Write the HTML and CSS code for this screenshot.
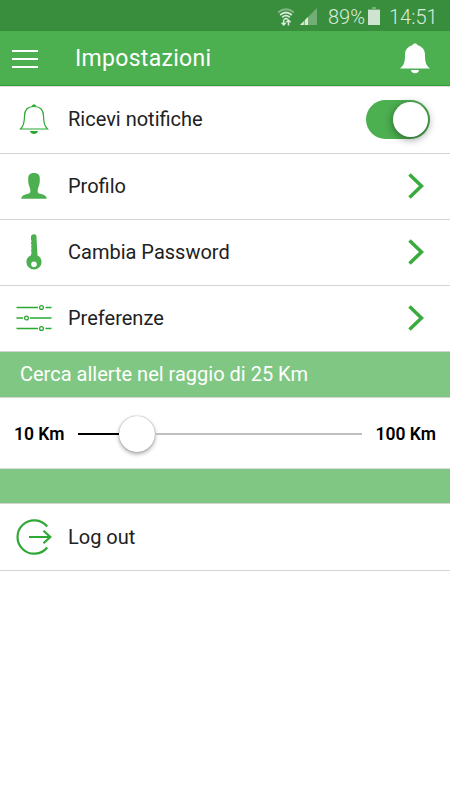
FILE: index.html
```html
<!DOCTYPE html>
<html lang="it">
<head>
  <meta charset="utf-8">
  <title>Impostazioni</title>
  <link rel="stylesheet" href="styles.css">
</head>
<body>
  <div class="status-bar">
    <svg class="wifi" width="18" height="20" viewBox="0 0 18 20">
      <path d="M1 5.500Q9-1 17 5.500" stroke="#81b783"/>
      <path d="M3.200 8Q9 3 14.800 8M5.200 10.400Q9 7 12.800 10.400M7.200 12.400Q9 11 10.800 12.400" stroke="#dcebdc"/>
      <path d="M6.700 12.500V18M4.600 15.800l2.100 2.200 2.100-2.200M11.500 18.500v-5.500M9.400 15.200l2.100-2.200 2.100 2.200" stroke="#dcebdc" stroke-width="1.500"/>
    </svg>
    <svg class="signal" width="17" height="17" viewBox="0 0 17 17">
      <path d="M0 17L17 0V17Z" fill="#72ae75"/>
      <path d="M0 17L8 9V17Z" fill="#dcebdc"/>
      <path d="M4.300 12V17" stroke="#388e3c" stroke-width=".7"/>
    </svg>
    <span class="percent">89%</span>
    <svg class="battery" width="12" height="18" viewBox="0 0 12 18">
      <path d="M4 0H8V2H12V4H0V2H4Z" fill="#72ae75"/>
      <path d="M0 3H12V18H0Z" fill="#cfe4d0"/>
    </svg>
    <span class="time">14:51</span>
  </div>

  <div class="header">
    <div class="menu">
      <span></span>
      <span></span>
      <span></span>
    </div>
    <h1>Impostazioni</h1>
    <svg class="bell" width="30" height="31" viewBox="0 0 30 31">
      <path d="M0 25.500C4 22.500 5 19 5 12C5 6.500 8 3.300 12.500 2.200C12.700 -.2 17.300 -.2 17.500 2.200C22 3.300 25 6.500 25 12C25 19 26 22.500 30 25.500Z" fill="#fff"/>
      <path d="M11 27H19C18.500 31.300 11.500 31.300 11 27Z" fill="#fff"/>
    </svg>
  </div>

  <div class="list">
    <div class="row first">
      <div class="icon">
        <svg width="30" height="31" viewBox="0 0 30 31">
          <path d="M1.500 25C4.800 22 5.500 18.500 5.500 12C5.500 6 8.500 2.500 15 2.500C21.500 2.500 24.500 6 24.500 12C24.500 18.500 25.200 22 28.500 25Z" fill="none" stroke="#2ba832" stroke-width="1.200"/>
          <path d="M12.800 2.300C12.800 -.1 17.200 -.1 17.200 2.300ZM11 27H19C18.300 31 11.700 31 11 27Z" fill="#2ba832"/>
        </svg>
      </div>
      <span class="label">Ricevi notifiche</span>
      <div class="toggle"><span class="knob"></span></div>
    </div>
    <div class="row">
      <div class="icon">
        <svg width="26" height="26" viewBox="0 0 26 26">
          <path d="M13 0C9 0 7 2 7.200 6C7.200 9 7.500 11.500 8.300 13.500C9.300 15.500 9.300 17 9.300 18.500C9.300 20.500 7.500 20.600 5 21.300C2 22.200 .4 23.300 .3 25.700H25.700C25.600 23.300 24 22.200 21 21.300C18.500 20.600 16.700 20.500 16.700 18.500C16.700 17 16.700 15.500 17.700 13.500C18.500 11.500 18.800 9 18.800 6C19 2 17 0 13 0Z" fill="#4caf50"/>
        </svg>
      </div>
      <span class="label">Profilo</span>
      <svg class="arrow" width="16" height="26" viewBox="0 0 16 26"><path d="M1.500 1.500L13.500 13L1.500 24.500"/></svg>
    </div>
    <div class="row">
      <div class="icon">
        <svg width="16" height="36" viewBox="0 0 16 36">
          <path d="M6.500 .5L9 .3L10.400 1.500L11.500 21.500C14 22.700 15.600 25 15.600 28A7.600 7.600 0 0 1 .4 28C.4 25 2 22.700 5 21.300L5.600 18L5 16.500L5.600 14.500L5 12.500L5.600 11L4.800 9L5.600 7.500L5 5.500V2Z" fill="#4caf50"/>
          <circle cx="8" cy="30.200" r="2.800" fill="#fff"/>
        </svg>
      </div>
      <span class="label">Cambia Password</span>
      <svg class="arrow" width="16" height="26" viewBox="0 0 16 26"><path d="M1.500 1.500L13.500 13L1.500 24.500"/></svg>
    </div>
    <div class="row">
      <div class="icon">
        <svg width="36" height="28" viewBox="0 0 36 28" fill="none" stroke="#2ba832" stroke-width="1.300">
          <path d="M.5 3.500H22M29.500 3.500H35.500M.5 14H7M14 14H35.500M.5 24.500H22M29.500 24.500H35.500"/>
          <circle cx="25.500" cy="3.500" r="1.900"/>
          <circle cx="10.500" cy="14" r="1.900"/>
          <circle cx="25.500" cy="24.500" r="1.900"/>
        </svg>
      </div>
      <span class="label">Preferenze</span>
      <svg class="arrow" width="16" height="26" viewBox="0 0 16 26"><path d="M1.500 1.500L13.500 13L1.500 24.500"/></svg>
    </div>
    <div class="divider"><span>Cerca allerte nel raggio di 25 Km</span></div>
    <div class="range">
      <b class="min">10 Km</b>
      <div class="track">
        <div class="filled"></div>
        <div class="thumb"></div>
        <div class="rest"></div>
      </div>
      <b class="max">100 Km</b>
    </div>
    <div class="divider empty"></div>
    <div class="row last">
      <div class="icon">
        <svg width="36" height="36" viewBox="0 0 36 36" fill="none" stroke="#2fa836" stroke-width="2.200">
          <path d="M31.200 7.500A16.700 16.700 0 1 0 31.200 28.500"/>
          <path d="M13 18H34M27.500 11.800L34.300 18L27.500 24.200"/>
        </svg>
      </div>
      <span class="label">Log out</span>
    </div>
  </div>
</body>
</html>
```
FILE: styles.css
```css
body {
  margin: 0;
  background: #fff;
  font-family: Roboto, sans-serif;
  color: #212121;
}
svg {
  display: block;
  flex: none;
}
.status-bar {
  height: 31px;
  box-sizing: border-box;
  padding: 2px 15px 0 0;
  background: #388e3c;
  color: #dcebdc;
  display: flex;
  align-items: center;
  justify-content: flex-end;
  font-size: 20px;
  font-weight: 300;
}
.wifi {
  fill: none;
  stroke-width: 1.7;
  margin-right: 5px;
}
.signal {
  margin-right: 11px;
}
.percent {
  width: 37px;
}
.battery {
  margin: 0 9px 2px 3px;
}
.time {
  width: 46px;
}
.header {
  height: 55px;
  box-sizing: border-box;
  padding: 0 20px 0 12px;
  background: #4caf50;
  border-bottom: 1px solid #35a03a;
  display: flex;
  align-items: center;
}
.menu {
  width: 26px;
  margin-right: 37px;
  padding-top: 1px;
  display: grid;
  gap: 6px;
}
.menu span {
  height: 2px;
  background: #fff;
}
h1 {
  flex: 1;
  margin: 0;
  color: #fff;
  font-size: 23px;
  font-weight: 400;
  letter-spacing: 0.3px;
}
.list {
  border-top: 1px solid #ddd;
}
.row {
  height: 66px;
  box-sizing: border-box;
  padding: 0 26px 1px 0;
  border-bottom: 1px solid #d3d3d3;
  display: flex;
  align-items: center;
}
.row.first {
  height: 67px;
  padding-right: 20px;
  padding-bottom: 2px;
}
.row.last {
  height: 67px;
  padding-bottom: 0;
}
.icon {
  width: 68px;
  display: flex;
  justify-content: center;
}
.label {
  flex: 1;
  font-size: 20px;
}
.arrow {
  fill: none;
  stroke: #3bab40;
  stroke-width: 3.6;
}
.toggle {
  width: 64px;
  height: 39px;
  box-sizing: border-box;
  padding: 2px;
  border-radius: 20px;
  background: #4caf50;
  display: flex;
  justify-content: flex-end;
}
.knob {
  width: 35px;
  height: 35px;
  border-radius: 50%;
  background: #fff;
  box-shadow: 0 2px 8px rgba(0, 0, 0, 0.45);
}
.divider {
  height: 46px;
  box-sizing: border-box;
  padding-left: 20px;
  background: #81c784;
  border-bottom: 1px solid #d3d3d3;
  color: #fff;
  font-size: 20px;
  line-height: 45px;
}
.divider.empty {
  height: 35px;
}
.range {
  height: 71px;
  box-sizing: border-box;
  padding: 1px 14px 0;
  border-bottom: 1px solid #ddd;
  color: #000;
  font-size: 17.5px;
  display: flex;
  align-items: center;
  justify-content: space-between;
}
.range b {
  font-weight: 600;
}
.track {
  width: 284px;
  display: flex;
  align-items: center;
}
.filled {
  width: 41px;
  height: 2px;
  background: #000;
}
.thumb {
  width: 36px;
  height: 36px;
  border-radius: 50%;
  background: #fff;
  box-shadow: 0 0 1px rgba(0, 0, 0, 0.5), 0 2px 4px rgba(0, 0, 0, 0.35);
}
.rest {
  flex: 1;
  height: 2px;
  background: #c0c0c0;
}
```
